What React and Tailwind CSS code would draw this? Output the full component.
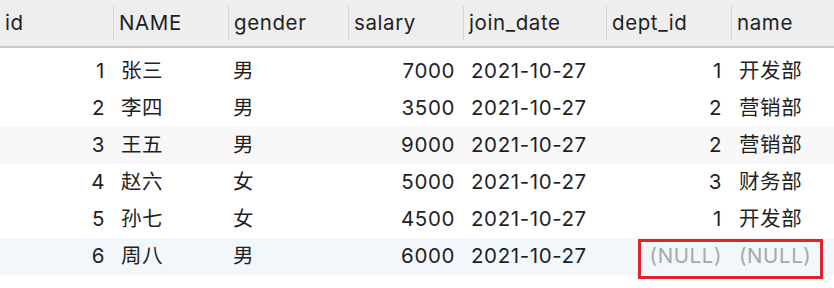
const columns = [
  { key: "id", label: "id", align: "right", pad: "pr-[8px]" },
  { key: "NAME", label: "NAME", align: "left", pad: "pl-[8px]" },
  { key: "gender", label: "gender", align: "left", pad: "pl-[5px]" },
  { key: "salary", label: "salary", align: "right", pad: "pr-[8px]" },
  { key: "join_date", label: "join_date", align: "left", pad: "pl-[8px]" },
  { key: "dept_id", label: "dept_id", align: "right", pad: "pr-[9px]" },
  { key: "name", label: "name", align: "left", pad: "pl-[8px]" },
];

const rows = [
  { id: 1, NAME: "张三", gender: "男", salary: 7000, join_date: "2021-10-27", dept_id: 1, name: "开发部" },
  { id: 2, NAME: "李四", gender: "男", salary: 3500, join_date: "2021-10-27", dept_id: 2, name: "营销部" },
  { id: 3, NAME: "王五", gender: "男", salary: 9000, join_date: "2021-10-27", dept_id: 2, name: "营销部" },
  { id: 4, NAME: "赵六", gender: "女", salary: 5000, join_date: "2021-10-27", dept_id: 3, name: "财务部" },
  { id: 5, NAME: "孙七", gender: "女", salary: 4500, join_date: "2021-10-27", dept_id: 1, name: "开发部" },
  { id: 6, NAME: "周八", gender: "男", salary: 6000, join_date: "2021-10-27", dept_id: null, name: null },
];

const grid = "grid grid-cols-[113px_115px_120px_115px_143px_125px_1fr]";

function rowBg(index) {
  if (index === 5) return "bg-[#f2f7fc]";
  if (index === 2) return "bg-[#f8f8f8]";
  return "bg-white";
}

export default function App() {
  return (
    <div
      className="w-[834px] h-[288px] overflow-hidden bg-white text-[20.5px] tracking-[0.6px] text-[#1f1f1f]"
      style={{ fontFamily: 'Inter, "Noto Sans CJK SC", sans-serif' }}
    >
      {/* Header */}
      <div className={`${grid} h-[48px] bg-[#eeeeee] border-b-2 border-[#cacaca]`}>
        {columns.map((col, i) => (
          <div key={col.key} className="flex items-center h-[46px]">
            {i > 0 && <div className="w-px h-[34px] bg-[#d6d6d6]" />}
            <span className="pl-[5px]">{col.label}</span>
          </div>
        ))}
      </div>

      {/* Rows */}
      <div className="pt-[5px]">
        {rows.map((row, index) => (
          <div key={row.id} className={`${grid} relative h-[37px] ${rowBg(index)}`}>
            {columns.map((col) => {
              const value = row[col.key];
              const isNull = value === null;
              return (
                <div
                  key={col.key}
                  className={`flex items-center ${col.align === "right" ? "justify-end" : "justify-start"} ${col.pad} ${isNull ? "text-[#a8a8a8]" : ""}`}
                >
                  {isNull ? "(NULL)" : value}
                </div>
              );
            })}
            {index === 5 && (
              <div className="absolute left-[638px] top-[1px] w-[185px] h-[40px] border-[3px] border-[#e3232b]" />
            )}
          </div>
        ))}
      </div>
    </div>
  );
}
